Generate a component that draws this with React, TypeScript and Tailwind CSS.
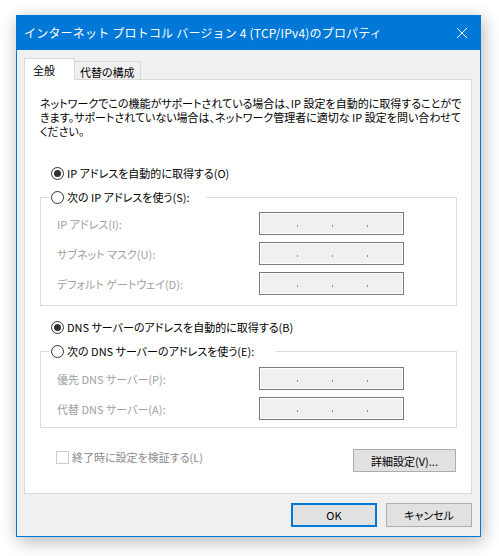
import React from 'react';

function Radio({ checked }: { checked?: boolean }) {
  return (
    <span className="w-[13px] h-[13px] rounded-full border border-[#333333] bg-white flex items-center justify-center shrink-0">
      {checked && <span className="w-[7px] h-[7px] rounded-full bg-[#333333]" />}
    </span>
  );
}

function IpBox() {
  return (
    <div className="w-[145px] h-[23px] border border-[#7a7a7a] bg-[#f0f0f0] shadow-[inset_0_0_0_1px_#ffffff] flex items-center pl-[37px] gap-[34px] pt-[4px]">
      {[0, 1, 2].map((i) => (
        <span key={i} className="w-px h-[2px] bg-[#8c8c8c]" />
      ))}
    </div>
  );
}

function FieldRow({ label }: { label: string }) {
  return (
    <div className="flex items-center pl-[16px]">
      <span className="w-[202px] text-[#a0a0a0]">{label}</span>
      <IpBox />
    </div>
  );
}

function RadioLabel({ checked, children }: { checked?: boolean; children: React.ReactNode }) {
  return (
    <span className="flex items-center gap-[3px] h-[16px]">
      <Radio checked={checked} />
      <span>{children}</span>
    </span>
  );
}

export default function App() {
  return (
    <div className="w-[499px] h-[556px] bg-white pl-[16px] pt-[15px] font-['Noto_Sans_CJK_JP',sans-serif] text-[12px] leading-[16px] text-black">
      <div className="w-[465px] h-[522px] border border-[#0078d7] bg-[#f0f0f0] flex flex-col shadow-[2px_4px_16px_rgba(0,0,0,0.3)]">
        {/* Title bar */}
        <div className="h-[34px] bg-[#0078d7] text-white flex items-center justify-between pl-[7px] pr-[13px]">
          <span className="tracking-[0.2px]">インターネット プロトコル バージョン 4 (TCP/IPv4)のプロパティ</span>
          <svg width="10" height="10" viewBox="0 0 10 10" className="shrink-0">
            <path d="M0 0 L10 10 M10 0 L0 10" stroke="#ffffff" strokeWidth="1" />
          </svg>
        </div>

        <div className="flex-1 flex flex-col pt-[8px] pl-[7px] pr-[8px] pb-[9px] text-[11px] [font-feature-settings:'palt']">
          {/* Tabs */}
          <div className="flex items-end h-[21px]">
            <div className="relative z-10 h-[22px] w-[51px] -mb-px bg-white border-l border-t border-r border-[#d9d9d9] pl-[8px] pt-[3px]">
              全般
            </div>
            <div className="h-[18px] bg-[#f0f0f0] border-t border-r border-[#d9d9d9] px-[5px] pt-[2px]">
              代替の構成
            </div>
          </div>

          {/* Panel */}
          <div className="bg-white border border-[#d9d9d9] h-[415px] flex flex-col pt-[16px] pl-[15px] pr-[14px]">
            <p className="leading-[14px] whitespace-nowrap">
              ネットワークでこの機能がサポートされている場合は、IP 設定を自動的に取得することがで
              <br />
              きます。サポートされていない場合は、ネットワーク管理者に適切な IP 設定を問い合わせて
              <br />
              ください。
            </p>

            <div className="mt-[27px] pl-[11px]">
              <RadioLabel checked>IP アドレスを自動的に取得する(O)</RadioLabel>
            </div>

            <fieldset className="mt-[8px] border border-[#dcdcdc] pb-[10px]">
              <legend className="ml-[8px] w-[157px] pl-[2px]">
                <RadioLabel>次の IP アドレスを使う(S):</RadioLabel>
              </legend>
              <div className="mt-[7px] flex flex-col gap-[7px]">
                <FieldRow label="IP アドレス(I):" />
                <FieldRow label="サブネット マスク(U):" />
                <FieldRow label="デフォルト ゲートウェイ(D):" />
              </div>
            </fieldset>

            <div className="mt-[13px] pl-[11px]">
              <RadioLabel checked>DNS サーバーのアドレスを自動的に取得する(B)</RadioLabel>
            </div>

            <fieldset className="mt-[8px] border border-[#dcdcdc] pb-[7px]">
              <legend className="ml-[8px] w-[227px] pl-[2px]">
                <RadioLabel>次の DNS サーバーのアドレスを使う(E):</RadioLabel>
              </legend>
              <div className="mt-[8px] flex flex-col gap-[7px]">
                <FieldRow label="優先 DNS サーバー(P):" />
                <FieldRow label="代替 DNS サーバー(A):" />
              </div>
            </fieldset>

            <div className="mt-[21px] flex items-start justify-between pl-[16px] pr-px">
              <div className="flex items-center gap-[3px] h-[14px] mt-px">
                <span className="w-[13px] h-[13px] border border-[#cccccc] bg-white" />
                <span className="text-[#8a8a8a]">終了時に設定を検証する(L)</span>
              </div>
              <button className="w-[103px] h-[23px] bg-[#e1e1e1] border border-[#adadad] flex items-center justify-center">
                詳細設定(V)...
              </button>
            </div>
          </div>

          {/* Dialog buttons */}
          <div className="mt-[9px] flex justify-end gap-[9px]">
            <button className="w-[86px] h-[24px] bg-[#e1e1e1] border-2 border-[#0078d7] flex items-center justify-center">
              OK
            </button>
            <button className="w-[86px] h-[24px] bg-[#e1e1e1] border border-[#adadad] flex items-center justify-center">
              キャンセル
            </button>
          </div>
        </div>
      </div>
    </div>
  );
}
